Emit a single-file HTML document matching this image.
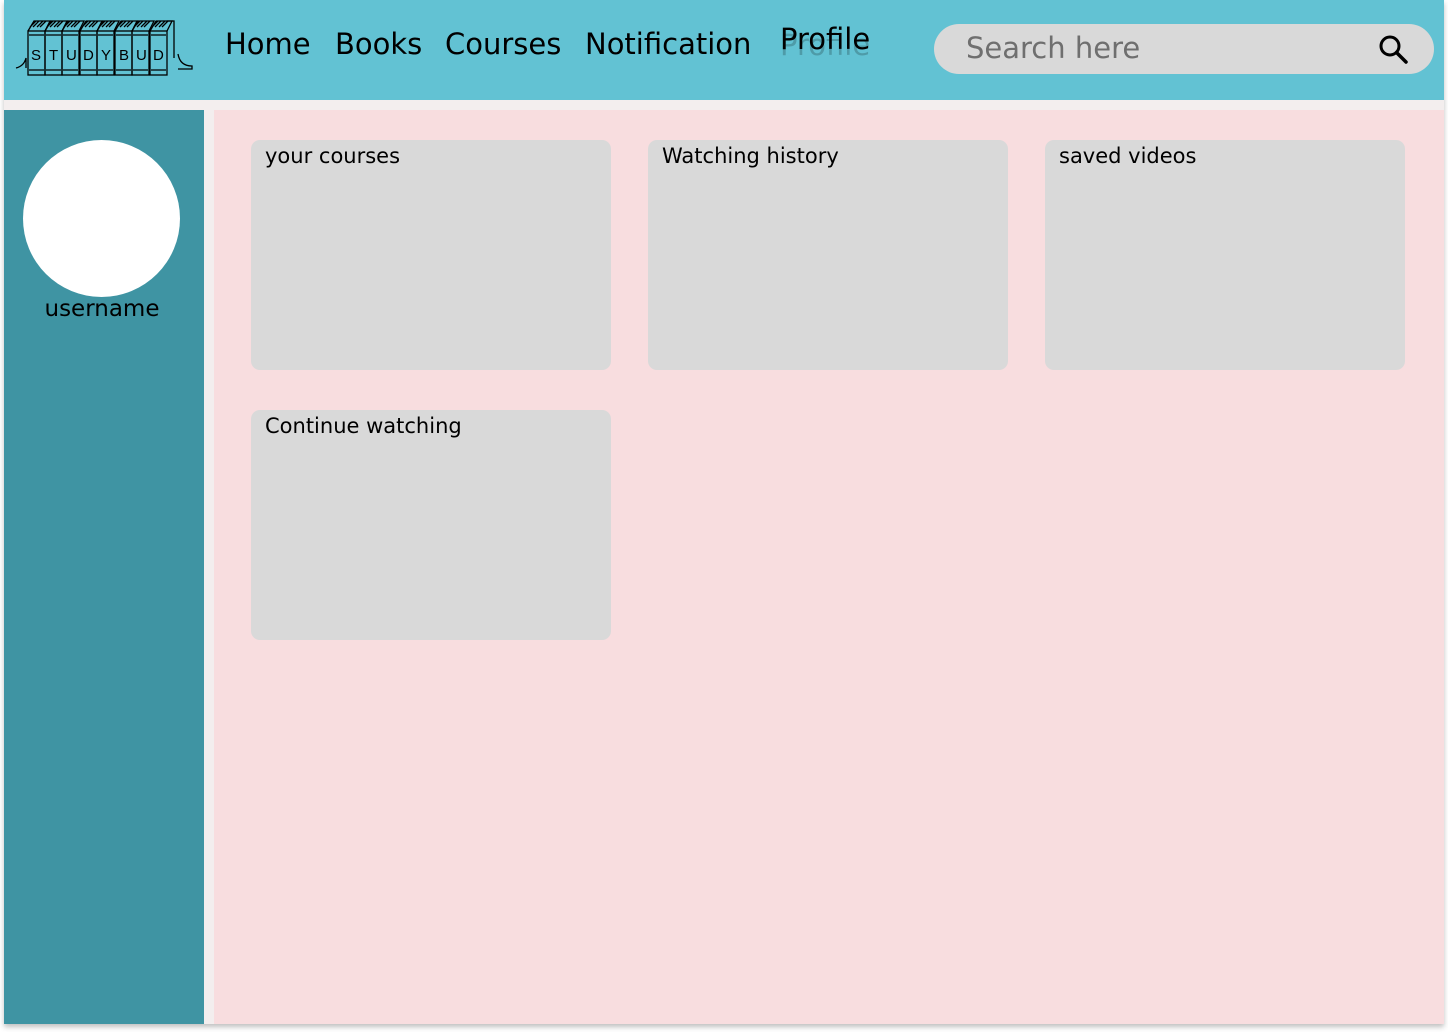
<!DOCTYPE html>
<html><head><meta charset="utf-8"><style>
body{margin:0;width:1448px;height:1032px;background:#fff;position:relative;overflow:hidden;font-family:"DejaVu Sans","Liberation Sans",sans-serif}
.frame{position:absolute;left:4px;top:0;width:1440px;height:1024px;background:#f3eeee;box-shadow:0 3px 5px rgba(0,0,0,.25)}
.hdr{position:absolute;left:0;top:0;width:1440px;height:100px;background:#62c2d3}
.nav{position:absolute;top:27px;font-size:29px;color:#000}
.side{position:absolute;left:0;top:110px;width:200px;height:914px;background:#3f94a3}
.main{position:absolute;left:210px;top:110px;width:1230px;height:914px;background:#f8dddf}
.card{position:absolute;width:360px;height:230px;background:#d9d9d9;border-radius:9px}
.card span{position:absolute;left:14px;top:4px;font-size:21px;color:#000}
</style></head><body>
<div class="frame">
<div class="hdr">
<svg style="position:absolute;left:10px;top:18px" width="182" height="58" viewBox="0 0 182 58" fill="none" stroke="#000" stroke-width="1.3">
<path d="M2 50 Q10 48 12 40 L12 50 M164 36 Q166 48 178 48 L178 51 L164 51"/>
<g id="b"><rect x="14" y="13" width="17" height="44"/><path d="M14 13 L20 3 L36 3 L31 13 M16 9 L22 3 M19 9 L25 3 M23 9 L29 3 M26 9 L32 3 M15 17 H30 M15 52 H30"/></g>
<use href="#b" x="17"/><use href="#b" x="34"/><use href="#b" x="52"/><use href="#b" x="69"/><use href="#b" x="87"/><use href="#b" x="104"/><use href="#b" x="122"/>
<path d="M153 3 L160 3 L160 40"/>
<g fill="#000" stroke="none" font-size="15" font-family="Liberation Sans"><text x="17" y="42">S</text><text x="35" y="42">T</text><text x="52" y="42">U</text><text x="69" y="42">D</text><text x="87" y="42">Y</text><text x="105" y="42">B</text><text x="122" y="42">U</text><text x="139" y="42">D</text></g>
</svg>
<div class="nav" style="left:221px">Home</div>
<div class="nav" style="left:331px">Books</div>
<div class="nav" style="left:441px">Courses</div>
<div class="nav" style="left:581px">Notification</div>
<div class="nav" style="left:776px;top:22px;text-shadow:0 6px 0 rgba(0,0,0,.2)">Profile</div>
<div style="position:absolute;left:930px;top:24px;width:500px;height:50px;border-radius:25px;background:#d9d9d9">
<span style="position:absolute;left:32px;top:7px;font-size:29px;color:#6f6f6f">Search here</span>
<svg style="position:absolute;left:444px;top:10px" width="32" height="32" viewBox="0 0 32 32"><circle cx="12" cy="12" r="9" fill="none" stroke="#000" stroke-width="3"/><path d="M18.5 18.5 L28 28" stroke="#000" stroke-width="3.5" stroke-linecap="round"/></svg>
</div>
</div>
<div class="side">
<div style="position:absolute;left:19px;top:30px;width:157px;height:157px;border-radius:50%;background:#fff"></div>
<div style="position:absolute;left:0;width:196px;top:186px;text-align:center;font-size:23px;color:#000">username</div>
</div>
<div class="main">
<div class="card" style="left:37px;top:30px"><span>your courses</span></div>
<div class="card" style="left:434px;top:30px"><span>Watching history</span></div>
<div class="card" style="left:831px;top:30px"><span>saved videos</span></div>
<div class="card" style="left:37px;top:300px"><span>Continue watching</span></div>
</div>
</div>
</body></html>
